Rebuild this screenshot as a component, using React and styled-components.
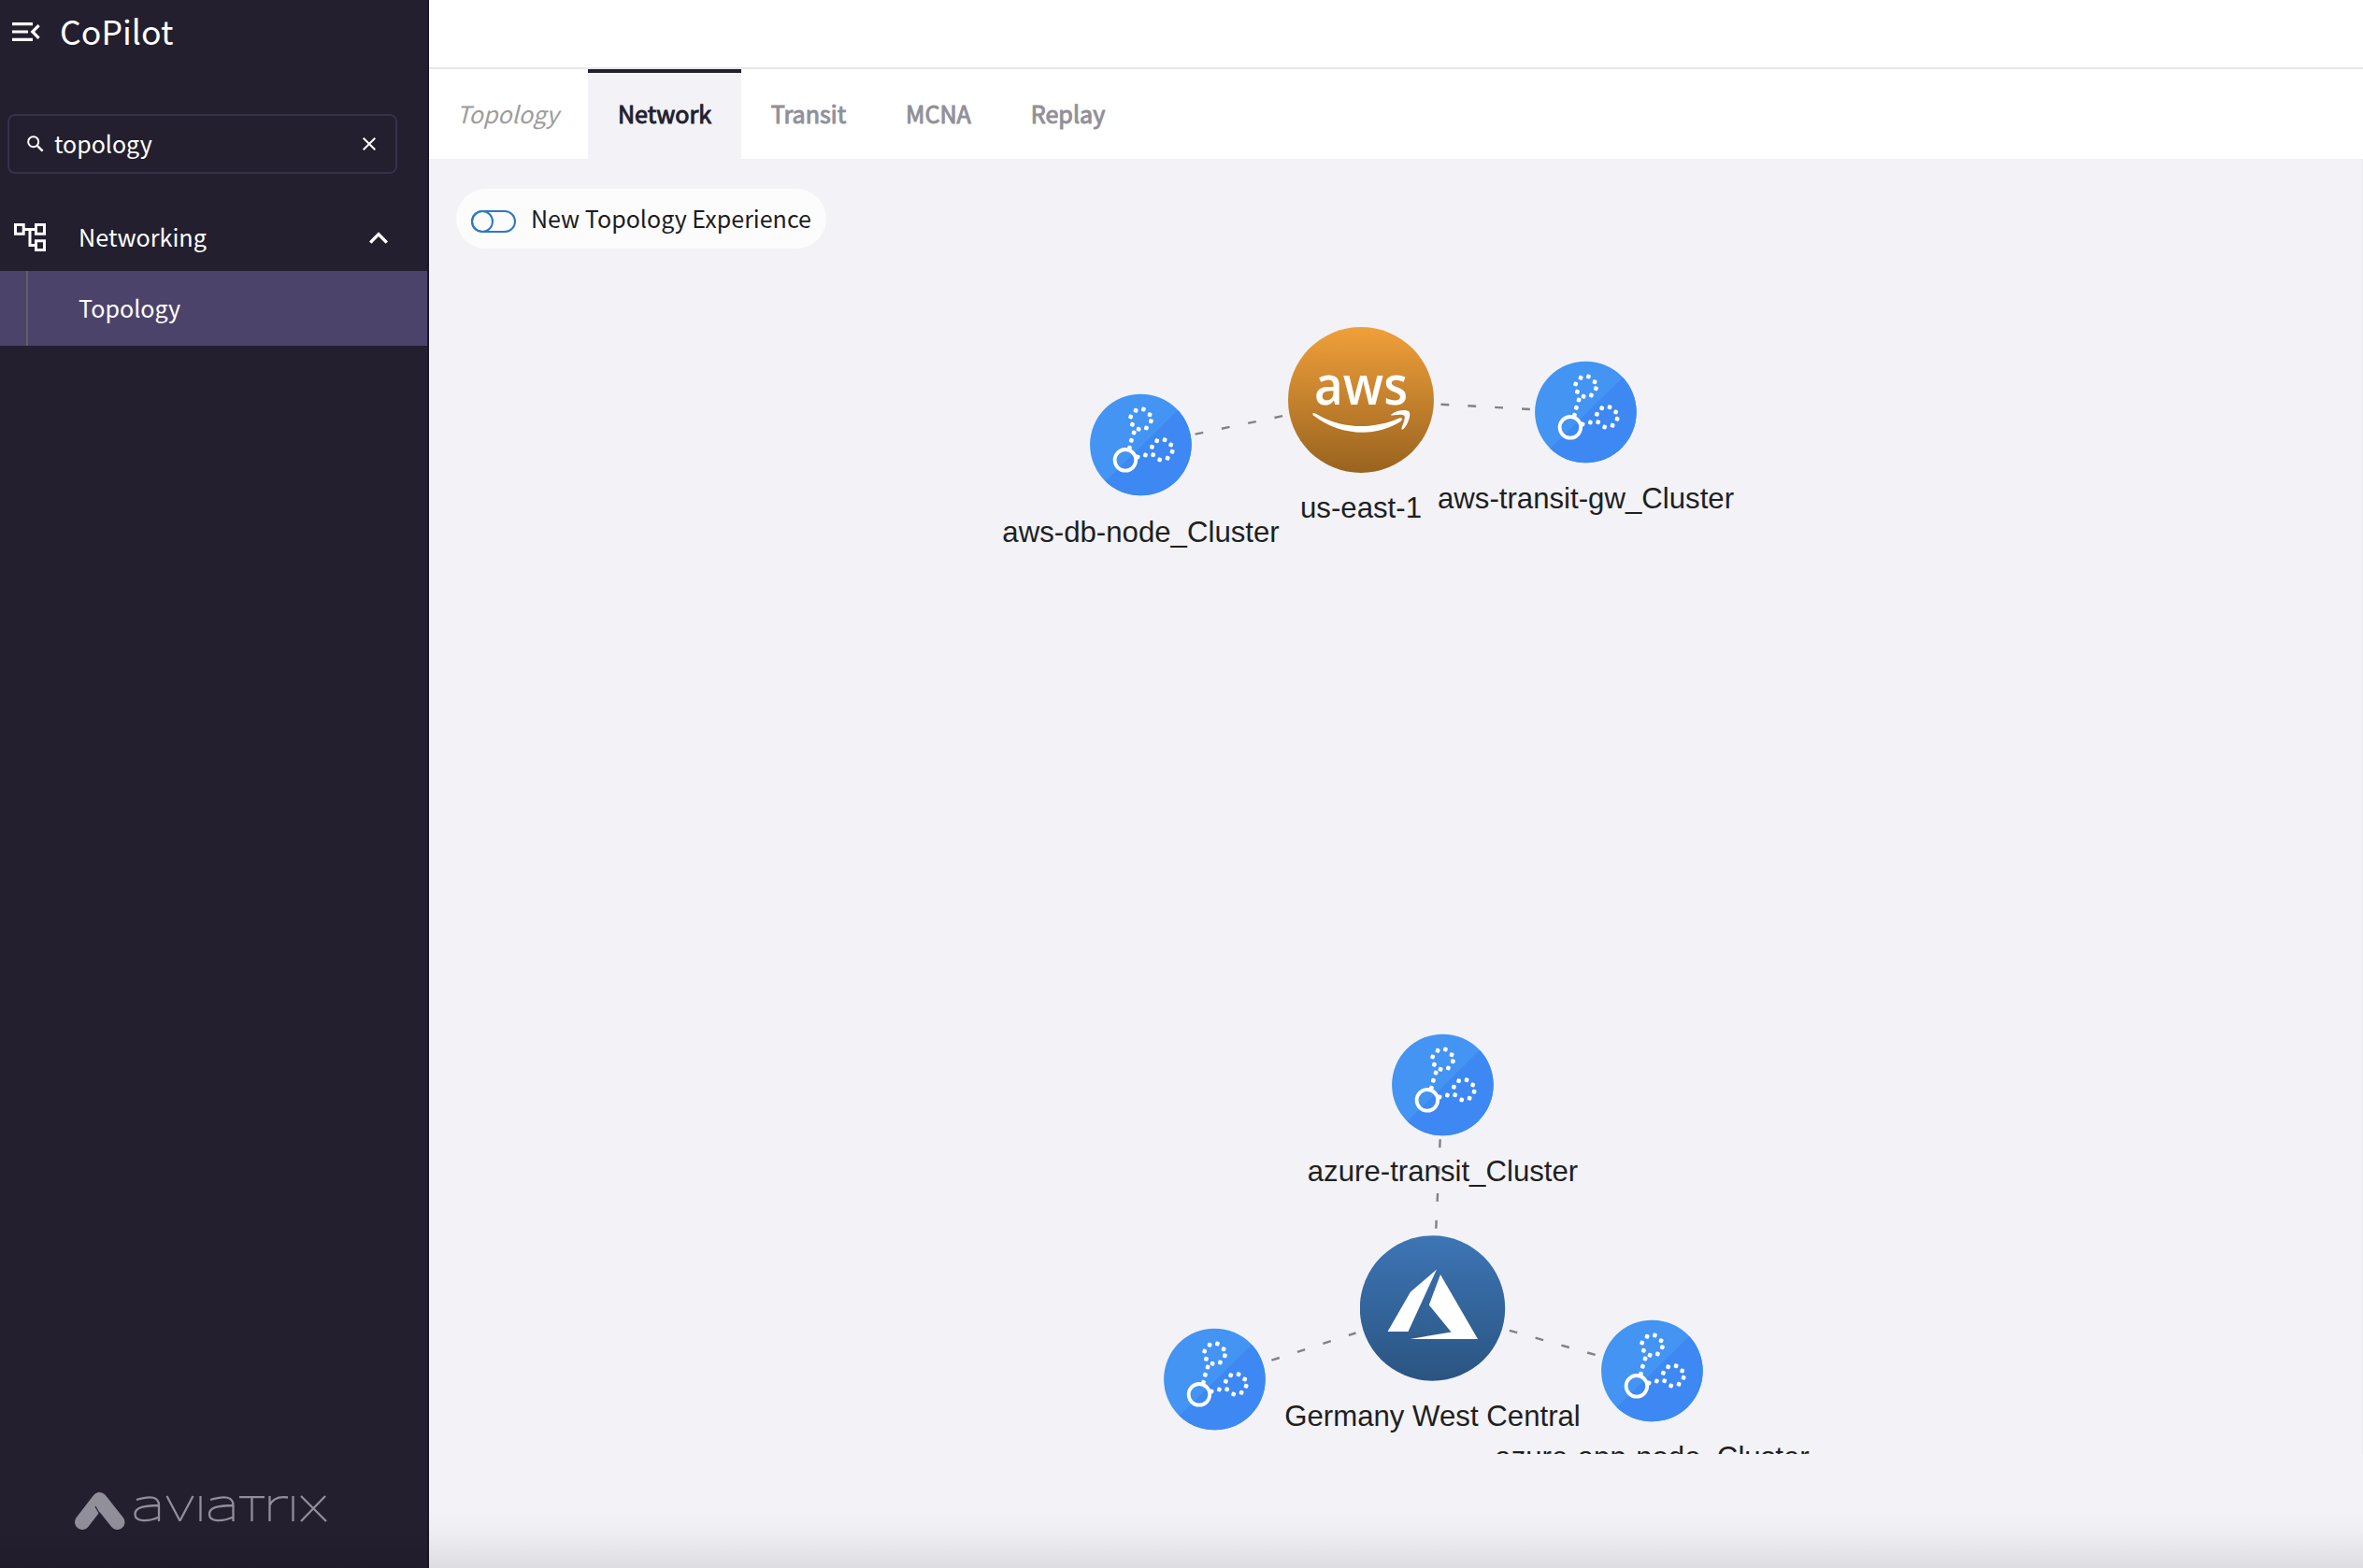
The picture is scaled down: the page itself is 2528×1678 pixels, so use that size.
import React from "react";
import styled, { createGlobalStyle } from "styled-components";

const ui = '"Noto Sans CJK SC", "Noto Sans", sans-serif';

const Global = createGlobalStyle`
  *, *::before, *::after { box-sizing: border-box; }
  body { margin: 0; background: #f2f2f7; overflow: hidden; }
`;

const Shell = styled.div`
  position: relative;
  display: flex;
  width: 2528px;
  height: 1678px;
  overflow: hidden;
  font-family: ${ui};
  background: #f2f2f7;

  &::after {
    content: "";
    position: absolute;
    left: 0;
    right: 0;
    bottom: 0;
    height: 64px;
    pointer-events: none;
    background: linear-gradient(to bottom, rgba(0, 0, 0, 0) 0%, rgba(0, 0, 0, 0.02) 40%, rgba(0, 0, 0, 0.085) 100%);
  }
`;

const Sidebar = styled.aside`
  display: flex;
  flex-direction: column;
  flex: none;
  width: 459px;
  background: #231f2f;
  border-right: 2px solid #1d172b;
  color: #fff;
`;

const Brand = styled.header`
  display: flex;
  align-items: center;
  height: 72px;
  padding: 0 0 4px 13px;
`;

const BrandName = styled.h1`
  margin: -3px 0 0 21px;
  font-size: 35.7px;
  font-weight: 400;
  line-height: 48px;
`;

const SearchBox = styled.div`
  display: flex;
  align-items: center;
  width: 417px;
  height: 64px;
  margin: 50px 0 0 8px;
  padding: 0 21px 0 19px;
  border: 2px solid #37304d;
  border-radius: 8px;
`;

const SearchText = styled.span`
  flex: 1;
  margin-left: 11px;
  padding-bottom: 2px;
  font-size: 25px;
  line-height: 36px;
`;

const Group = styled.div`
  display: flex;
  align-items: center;
  height: 68px;
  margin-top: 36px;
  padding: 0 42px 4px 15px;
  font-size: 25.2px;
  line-height: 36px;
`;

const GroupName = styled.span`
  flex: 1;
  margin-left: 35px;
  padding-bottom: 2px;
`;

const NavItem = styled.a`
  display: flex;
  height: 80px;
  padding-left: 28px;
  background: #4c436a;
  font-size: 25.1px;
  line-height: 78px;

  &::before {
    content: "";
    width: 2px;
    height: 100%;
    margin-right: 54px;
    background: #625f6c;
  }
`;

const SidebarFoot = styled.footer`
  margin-top: auto;
  padding: 0 0 40px 79px;
  line-height: 0;
`;

const Main = styled.main`
  display: flex;
  flex-direction: column;
  flex: 1;
  min-width: 0;
`;

const TopBar = styled.div`
  height: 74px;
  background: #fff;
  border-bottom: 2px solid #e6e6eb;
`;

const Tabs = styled.nav`
  display: flex;
  height: 96px;
  background: #fff;
`;

const Tab = styled.span`
  display: flex;
  align-items: center;
  justify-content: center;
  width: ${(p) => p.$w}px;
  padding-bottom: 7px;
  border-top: 4px solid ${(p) => (p.$active ? "#231f2f" : "transparent")};
  background: ${(p) => (p.$active ? "#f2f2f7" : "transparent")};
  color: ${(p) => (p.$active ? "#231f2f" : "#91909a")};
  font-size: 25.1px;
  font-weight: 400;
  line-height: 36px;
  -webkit-text-stroke: 1px currentColor;
`;

const TabTitle = styled(Tab)`
  padding-right: 2px;
  color: #9c9c9c;
  font-style: italic;
  -webkit-text-stroke: 0;
`;

const Canvas = styled.section`
  position: relative;
  height: 1386px;
  overflow: hidden;
  padding: 32px 0 0 29px;
  box-shadow: inset -2px 0 3px -1px rgba(0, 0, 0, 0.04);
`;

const Toggle = styled.div`
  display: inline-flex;
  align-items: center;
  width: 396px;
  height: 64px;
  padding-left: 16px;
  border-radius: 32px;
  background: #fcfcfd;
  color: #1c1c22;
  font-size: 25.05px;
  line-height: 36px;
  white-space: nowrap;
`;

const ToggleText = styled.span`
  padding-bottom: 2px;
`;

const Switch = styled.span`
  width: 48px;
  height: 24px;
  margin: 6px 16px 0 0;
  border: 2px solid #2f78c4;
  border-radius: 12px;

  &::before {
    content: "";
    display: block;
    width: 24px;
    height: 24px;
    margin: -2px 0 0 -2px;
    border: 2px solid #2f78c4;
    border-radius: 50%;
  }
`;

const Edges = styled.svg`
  position: absolute;
  left: 0;
  top: 0;
  width: 100%;
  height: 100%;

  line {
    stroke: #828285;
    stroke-width: 2.4;
    stroke-dasharray: 8.8 20.1;
  }
`;

const NodeBox = styled.div`
  position: absolute;
  left: ${(p) => p.$x}px;
  top: ${(p) => p.$y}px;
  width: ${(p) => p.$r * 2}px;
  height: ${(p) => p.$r * 2}px;
  margin: ${(p) => -p.$r}px 0 0 ${(p) => -p.$r}px;
  display: flex;
  flex-direction: column;
  align-items: center;

  svg { display: block; flex: none; }
`;

const NodeLabel = styled.span`
  margin-top: ${(p) => p.$gap}px;
  font-family: "Liberation Sans", Arial, sans-serif;
  font-size: 31.2px;
  line-height: 36px;
  white-space: nowrap;
  color: #1f1f21;
`;

const CollapseIcon = () => (
  <svg width="30" height="20" viewBox="0 0 30 20" fill="none" stroke="#fff" strokeWidth="3.2">
    <path d="M0 1.6H22M0 10H17M0 18.4H22" />
    <path d="M28.6 3.2L21.8 10L28.6 16.8" />
  </svg>
);

const SearchIcon = () => (
  <svg width="18" height="18" viewBox="0 0 18 18" fill="none" stroke="#fff" strokeWidth="2">
    <circle cx="6.7" cy="6.7" r="5.5" />
    <path d="M10.8 10.8L16.6 16.6" strokeWidth="2.5" />
  </svg>
);

const ClearIcon = () => (
  <svg width="14" height="14" viewBox="0 0 14 14" stroke="#fff" strokeWidth="2">
    <path d="M0.7 0.7L13.3 13.3M13.3 0.7L0.7 13.3" />
  </svg>
);

const TreeIcon = () => (
  <svg width="34" height="30" viewBox="0 0 34 30" fill="none" stroke="#fff" strokeWidth="3">
    <path d="M1.5 1.5H10.2V11.2H1.5Z M23.5 1.5H32.5V11.2H23.5Z M23.5 18.8H32.5V28.5H23.5Z" />
    <path d="M11 6.6H23M17 6.6V23.6H23" />
  </svg>
);

const ChevronIcon = () => (
  <svg width="20" height="13" viewBox="0 0 20 13" fill="none" stroke="#fff" strokeWidth="3.4">
    <path d="M1.2 11.6L10 2.6L18.8 11.6" />
  </svg>
);

const AviatrixLogo = () => (
  <svg width="272" height="42" viewBox="0 0 272 42" fill="none" stroke="#918f9a">
    <path d="M9 33L27.500 9L46.500 33" strokeWidth="16" strokeLinecap="round" strokeLinejoin="round" />
    <path d="M23 16L27.200 23.500" stroke="#231f2f" strokeWidth="1.200" />
    <g strokeWidth="2.3">
      <path d="M67 9Q91 1.500 91 15V32M91 15C74 15.500 65.500 17 65.500 24.500C65.500 33 80 32.500 91 27.500" />
      <path d="M99.500 5L113.500 31.500L127.500 5" strokeLinejoin="bevel" />
      <path d="M135.500 5V32" />
      <path d="M146 9Q170.500 1.500 170.500 15V32M170.500 15C153 15.500 145 17 145 24.500C145 33 159 32.500 170.500 27.500" />
      <path d="M177 6.200H204M190.500 6.200V32" />
      <path d="M209.500 5V32M209.500 15Q214 4.500 229 6.500" />
      <path d="M234.500 5V32" />
      <path d="M243 5L270 32M269 5L243 32" />
    </g>
  </svg>
);

const dots = [
  [-5.3, -36.7], [3, -38], [9.7, -32.3], [11, -25.3], [6, -18], [-2.3, -16.7],
  [-9, -21.7], [-10.7, -30], [-7.3, -13], [-10, -4.7], [-12, 3.3],
  [17.3, -4.3], [25.7, -5.3], [32.3, 0], [33.7, 7.3], [28.7, 14.3],
  [20.3, 16], [13.3, 10.7], [12, 2.3], [5, 11], [-3.3, 13],
];

const ClusterIcon = () => (
  <svg width="110" height="110" viewBox="-54.4 -55 110 110">
    <defs>
      <clipPath id="clusterDisc"><circle r="54.3" /></clipPath>
    </defs>
    <circle r="54.3" fill="#4394f3" />
    <g clipPath="url(#clusterDisc)">
      <path d="M60 -57L-60 61H60Z" fill="#3d88f2" />
    </g>
    <g fill="#fff">
      {dots.map(([x, y]) => (
        <rect key={`${x},${y}`} x={x - 2.3} y={y - 2.3} width="4.6" height="4.6" rx="1.5" transform={`rotate(15 ${x} ${y})`} />
      ))}
    </g>
    <circle cx="-16.5" cy="16.3" r="11.3" fill="none" stroke="#fff" strokeWidth="3.8" />
  </svg>
);

const AwsIcon = () => (
  <svg width="156" height="156" viewBox="-78 -78 156 156">
    <defs>
      <linearGradient id="awsFill" x1="0" y1="0" x2="0" y2="1">
        <stop offset="0" stopColor="#f0a03a" />
        <stop offset="1" stopColor="#99631f" />
      </linearGradient>
    </defs>
    <circle r="78" fill="url(#awsFill)" />
    <text x="0" y="4.8" textAnchor="middle" textLength="100" lengthAdjust="spacingAndGlyphs" fontFamily="Open Sans" fontWeight="600" fontSize="58" fill="#fff">aws</text>
    <path d="M-52 14.500C-50 13 -48 14.500 -46 16C-18 32 14 31 41 19.500C44 18.500 45 20.500 42.500 23C16 40 -22 39 -51 16.500Z" fill="#fff" />
    <path d="M32.500 15.500C38 10.500 49 10 51.500 12.500C54 16 50 27 45.500 31C44 32 43 31.500 43.500 30C46 23.500 47.500 18.500 46.500 17C45 15 39 15.500 34 16.500C32.500 16.800 31.500 16.500 32.500 15.500Z" fill="#fff" />
  </svg>
);

const AzureIcon = () => (
  <svg width="156" height="156" viewBox="-77.5 -78 156 156">
    <defs>
      <linearGradient id="azureFill" x1="0" y1="0" x2="0" y2="1">
        <stop offset="0" stopColor="#3d75b5" />
        <stop offset="1" stopColor="#2a5481" />
      </linearGradient>
    </defs>
    <circle r="77.7" fill="url(#azureFill)" />
    <path d="M4.500 -41.500L-23.500 -17.500L-48 25H-26Z M8.500 -36L-3.700 -3.500L20 25.500L-24 33H48.500Z" fill="#fff" />
  </svg>
);

const icons = { cluster: ClusterIcon, aws: AwsIcon, azure: AzureIcon };

const nodes = [
  { kind: "cluster", x: 761.5, y: 306, gap: 21, label: "aws-db-node_Cluster" },
  { kind: "aws", x: 997, y: 258, label: "us-east-1" },
  { kind: "cluster", x: 1237.5, y: 271, label: "aws-transit-gw_Cluster" },
  { kind: "cluster", x: 1084.5, y: 990.5, label: "azure-transit_Cluster" },
  { kind: "azure", x: 1073.5, y: 1230, label: "Germany West Central" },
  { kind: "cluster", x: 840.5, y: 1305.5 },
  { kind: "cluster", x: 1308.5, y: 1297.4, label: "azure-app-node_Cluster" },
];

const edges = [
  [819.6, 294.6, 914, 275],
  [1082.5, 262.7, 1179, 268],
  [1081.7, 1049.3, 1077.3, 1145],
  [901.4, 1285.7, 991.5, 1256.5],
  [1155.8, 1253.8, 1248, 1280],
];

function Node({ kind, x, y, label, gap = 20 }) {
  const Icon = icons[kind];
  return (
    <NodeBox $x={x} $y={y} $r={kind === "cluster" ? 55 : 78}>
      <Icon />
      {label && <NodeLabel $gap={gap}>{label}</NodeLabel>}
    </NodeBox>
  );
}

export default function App() {
  return (
    <Shell>
      <Global />
      <Sidebar>
        <Brand>
          <CollapseIcon />
          <BrandName>CoPilot</BrandName>
        </Brand>
        <SearchBox>
          <SearchIcon />
          <SearchText>topology</SearchText>
          <ClearIcon />
        </SearchBox>
        <Group>
          <TreeIcon />
          <GroupName>Networking</GroupName>
          <ChevronIcon />
        </Group>
        <NavItem>Topology</NavItem>
        <SidebarFoot>
          <AviatrixLogo />
        </SidebarFoot>
      </Sidebar>
      <Main>
        <TopBar />
        <Tabs>
          <TabTitle $w={170}>Topology</TabTitle>
          <Tab $w={164} $active>Network</Tab>
          <Tab $w={144}>Transit</Tab>
          <Tab $w={134}>MCNA</Tab>
          <Tab $w={143}>Replay</Tab>
        </Tabs>
        <Canvas>
          <Toggle>
            <Switch />
            <ToggleText>New Topology Experience</ToggleText>
          </Toggle>
          <Edges>
            {edges.map(([x1, y1, x2, y2]) => (
              <line key={x1} x1={x1} y1={y1} x2={x2} y2={y2} />
            ))}
          </Edges>
          {nodes.map((n) => (
            <Node key={n.x} {...n} />
          ))}
        </Canvas>
      </Main>
    </Shell>
  );
}
